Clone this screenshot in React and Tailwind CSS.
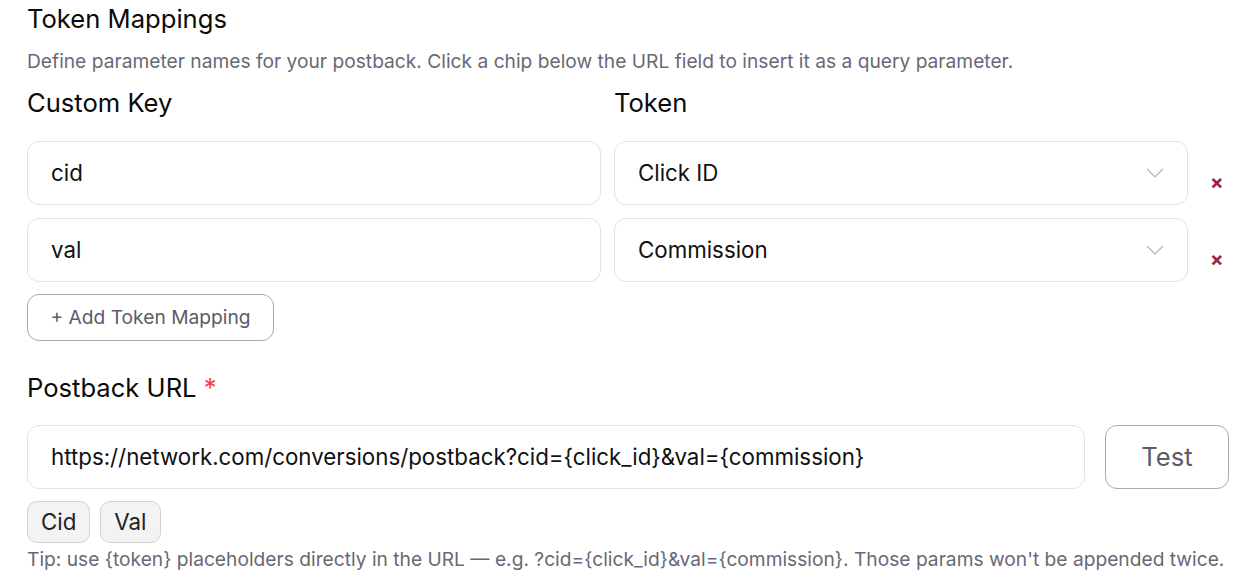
import { useState } from 'react';

const TOKENS = ['Click ID', 'Commission', 'Payout', 'Sub ID'];

const Chevron = () => (
  <svg width="18" height="10" viewBox="0 0 18 10" fill="none" className="shrink-0">
    <path d="M1 1l8 8 8-8" stroke="#b4b4bc" strokeWidth="1.2" />
  </svg>
);

const MappingRow = ({ row, onRemove }) => (
  <div className="flex items-center">
    <div className="w-[574px] h-[64px] rounded-[12px] border border-[#e3e3e3] bg-white flex items-center px-[23px] text-[22.3px] text-[#111]">
      {row.key}
    </div>
    <div className="ml-[13px] w-[574px] h-[64px] rounded-[12px] border border-[#e3e3e3] bg-white flex items-center justify-between pl-[23px] pr-[23px] text-[22.3px] text-[#111]">
      <span>{row.token}</span>
      <Chevron />
    </div>
    <button
      onClick={onRemove}
      className="ml-[22px] mt-[18px] text-[#9b2448] text-[20px] font-bold leading-none"
    >
      ×
    </button>
  </div>
);

export default function App() {
  const [rows, setRows] = useState([
    { key: 'cid', token: 'Click ID' },
    { key: 'val', token: 'Commission' },
  ]);

  return (
    <div className="bg-white min-h-[582px] pl-[27px] pt-[3px] font-['Inter',sans-serif] text-[#111]">
      <h2 className="text-[25.6px] leading-[32px] font-normal text-[#0a0a0a]">Token Mappings</h2>
      <p className="mt-[14px] text-[19.2px] leading-[24px] text-[#686876]">
        Define parameter names for your postback. Click a chip below the URL field to insert it as a query parameter.
      </p>

      <div className="mt-[14px] flex text-[25.6px] leading-[32px] font-normal text-[#0a0a0a]">
        <div className="w-[587px]">Custom Key</div>
        <div>Token</div>
      </div>

      <div className="mt-[22px] flex flex-col gap-[13px]">
        {rows.map((row, i) => (
          <MappingRow
            key={i}
            row={row}
            onRemove={() => setRows(rows.filter((_, j) => j !== i))}
          />
        ))}
      </div>

      <button
        onClick={() => setRows([...rows, { key: '', token: TOKENS[0] }])}
        className="mt-[12px] h-[47px] w-[247px] rounded-[12px] border border-[#a9a9b1] text-[19.2px] text-[#5b5b69]"
      >
        + Add Token Mapping
      </button>

      <h3 className="mt-[31px] text-[25.6px] leading-[32px] font-normal text-[#0a0a0a]">
        Postback URL <span className="text-[#ef4444]">*</span>
      </h3>

      <div className="mt-[21px] flex items-center">
        <div className="w-[1058px] h-[64px] rounded-[12px] border border-[#e3e3e3] bg-white flex items-center px-[23px] text-[22.3px] text-[#111]">
          https://network.com/conversions/postback?cid={'{click_id}'}&amp;val={'{commission}'}
        </div>
        <button className="ml-[20px] w-[124px] h-[64px] rounded-[12px] border border-[#a9a9b1] text-[25.6px] text-[#5b5b69]">
          Test
        </button>
      </div>

      <div className="mt-[12px] flex gap-[10px]">
        {['Cid', 'Val'].map((c) => (
          <button
            key={c}
            className="h-[42px] px-[13px] rounded-[10px] border border-[#d2d2d2] bg-[#f3f3f3] text-[22.3px] text-[#222]"
          >
            {c}
          </button>
        ))}
      </div>

      <p className="mt-[4px] text-[19.2px] leading-[24px] text-[#686876]">
        Tip: use {'{token}'} placeholders directly in the URL — e.g. ?cid={'{click_id}'}&amp;val={'{commission}'}. Those params won't be appended twice.
      </p>
    </div>
  );
}
